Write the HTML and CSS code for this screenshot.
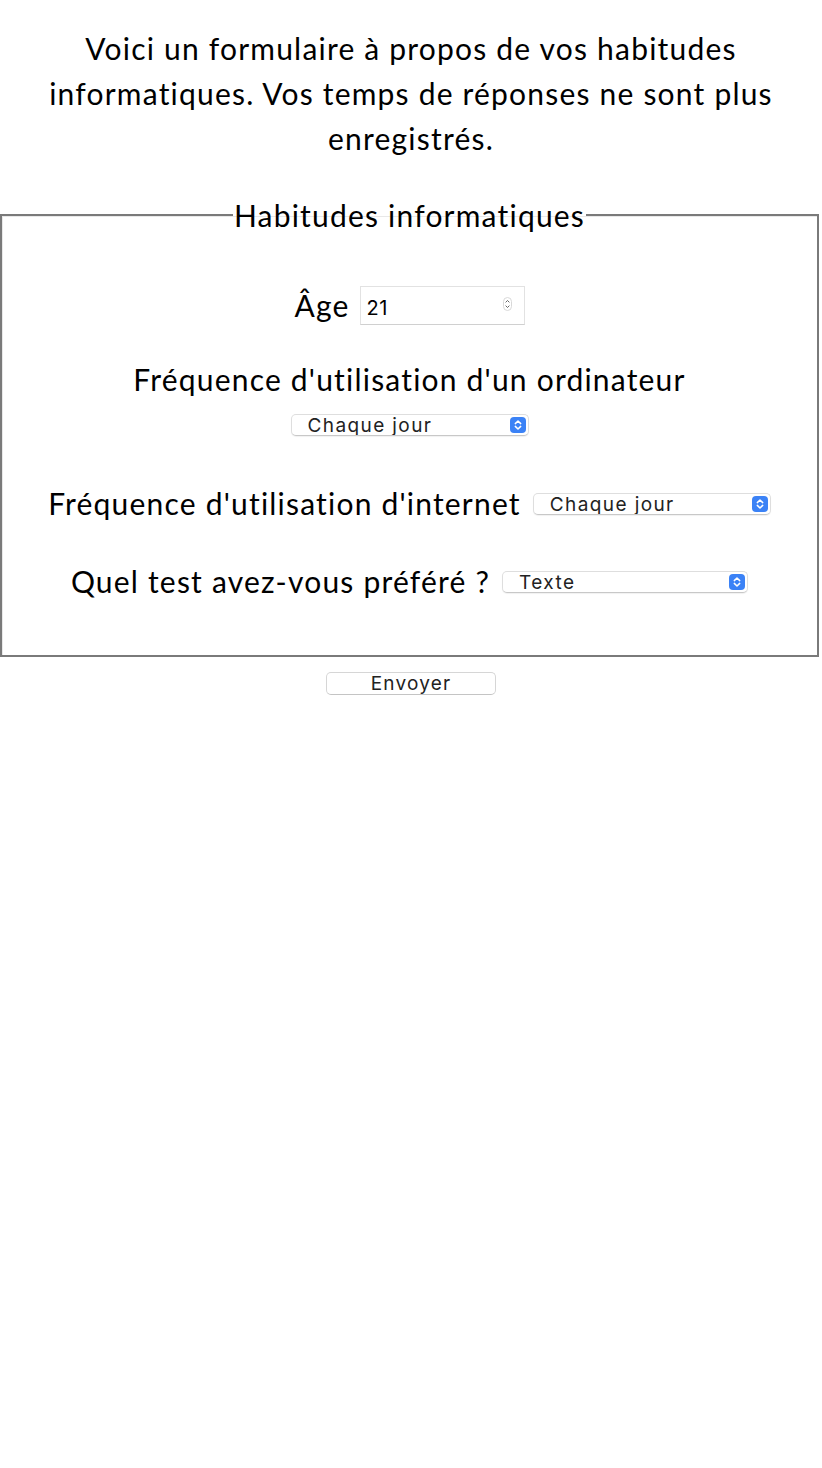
FILE: index.html
```html
<!DOCTYPE html>
<html lang="fr">
<head>
<meta charset="utf-8">
<title>Habitudes informatiques</title>
<link rel="stylesheet" href="styles.css">
</head>
<body>
<p class="intro">Voici un formulaire à propos de vos habitudes informatiques. Vos temps de réponses ne sont plus enregistrés.</p>
<form class="form">
  <fieldset class="group">
    <legend class="legend">Habitudes informatiques</legend>
    <div class="row row-age">
      <label class="label" for="age">Âge</label>
      <span class="number">
        <input class="number-input" id="age" type="text" value="21">
        <svg class="spin" width="9" height="14" viewBox="0 0 9 14"><rect x="0.5" y="0.5" width="8" height="13" rx="4" fill="none" stroke="#d8d8d8"/><path d="M2.6 5.4 L4.5 3.5 L6.4 5.4 M2.6 8.6 L4.5 10.5 L6.4 8.6" fill="none" stroke="#555" stroke-width="0.9"/></svg>
      </span>
    </div>
    <div class="row row-stacked">
      <label class="label" for="ordi">Fréquence d'utilisation d'un ordinateur</label>
      <span class="select select-ordi">
        <select class="select-el" id="ordi"><option>Chaque jour</option></select>
        <svg class="arrows" width="16" height="16" viewBox="0 0 16 16"><rect width="16" height="16" rx="4" fill="#3b82f6"/><path d="M5.3 6.6 L8 4 L10.7 6.6 M5.3 9.4 L8 12 L10.7 9.4" fill="none" stroke="#fff" stroke-width="1.5" stroke-linecap="round" stroke-linejoin="round"/></svg>
      </span>
    </div>
    <div class="row">
      <label class="label" for="net">Fréquence d'utilisation d'internet</label>
      <span class="select select-net">
        <select class="select-el" id="net"><option>Chaque jour</option></select>
        <svg class="arrows" width="16" height="16" viewBox="0 0 16 16"><rect width="16" height="16" rx="4" fill="#3b82f6"/><path d="M5.3 6.6 L8 4 L10.7 6.6 M5.3 9.4 L8 12 L10.7 9.4" fill="none" stroke="#fff" stroke-width="1.5" stroke-linecap="round" stroke-linejoin="round"/></svg>
      </span>
    </div>
    <div class="row row-last">
      <label class="label" for="test">Quel test avez-vous préféré ?</label>
      <span class="select select-test">
        <select class="select-el" id="test"><option>Texte</option></select>
        <svg class="arrows" width="16" height="16" viewBox="0 0 16 16"><rect width="16" height="16" rx="4" fill="#3b82f6"/><path d="M5.3 6.6 L8 4 L10.7 6.6 M5.3 9.4 L8 12 L10.7 9.4" fill="none" stroke="#fff" stroke-width="1.5" stroke-linecap="round" stroke-linejoin="round"/></svg>
      </span>
    </div>
  </fieldset>
  <div class="actions">
    <button class="submit" type="button">Envoyer</button>
  </div>
</form>
</body>
</html>
```

FILE: styles.css
```css
html, body {
  margin: 0;
  padding: 0;
  background: #fff;
}

body {
  font-family: "Lato", "Noto Sans", sans-serif;
  font-variant-ligatures: none;
  color: #000;
  font-size: 30px;
  letter-spacing: 1.2px;
}

.intro {
  margin: 26px 0 0;
  padding: 0 30px;
  text-align: center;
  line-height: 45px;
}

.form {
  margin: 0;
}

.group {
  margin: 34px 3px 0 0;
  padding: 0 8px 51px;
  border: 2px solid #7a7a7a;
  box-shadow: inset 1px 1px 0 #e8e8e8;
}

.legend {
  margin: 0 auto;
  padding: 0 1px;
  line-height: 40px;
}

.row {
  display: flex;
  justify-content: center;
  align-items: center;
  gap: 12px;
  height: 45px;
  margin-top: 33px;
}

.row-age {
  margin-top: 48px;
  gap: 10px;
}

.row-stacked {
  flex-direction: column;
  justify-content: flex-start;
  height: 91px;
  gap: 0;
  margin-top: 29px;
}

.row-stacked .select {
  margin-top: 12px;
}

.label {
  line-height: 45px;
}

.number {
  position: relative;
  display: inline-flex;
}

.number-input {
  box-sizing: border-box;
  width: 165px;
  height: 39px;
  margin: 0;
  padding: 4px 30px 0 6px;
  border: 1px solid #e2e2e2;
  border-bottom-color: #d0d0d0;
  font-family: "Inter", "Liberation Sans", sans-serif;
  font-size: 20px;
  letter-spacing: 0.5px;
  color: #000;
  background: #fff;
  outline: none;
}

.spin {
  position: absolute;
  right: 13px;
  top: 11px;
}

.select {
  position: relative;
  display: inline-flex;
}

.select-el {
  -webkit-appearance: none;
  appearance: none;
  box-sizing: border-box;
  height: 22px;
  margin: 0;
  padding: 1px 0 0 16px;
  border: 1px solid #dedede;
  border-bottom-color: #c8c8c8;
  border-radius: 5px;
  background: #fff;
  font-family: "Inter", "Liberation Sans", sans-serif;
  font-size: 19px;
  letter-spacing: 1.4px;
  line-height: 20px;
  color: #222;
  box-shadow: 0 1px 1px rgba(0,0,0,0.06);
}

.select-ordi .select-el,
.select-net .select-el {
  width: 238px;
}

.select-test .select-el {
  width: 246px;
}

.arrows {
  position: absolute;
  right: 3px;
  top: 3px;
  pointer-events: none;
}

.actions {
  display: flex;
  justify-content: center;
  margin-top: 15px;
}

.submit {
  box-sizing: border-box;
  width: 170px;
  height: 23px;
  margin: 0;
  padding: 0;
  border: 1px solid #d6d6d6;
  border-bottom-color: #c4c4c4;
  border-radius: 5px;
  background: #fff;
  font-family: "Inter", "Liberation Sans", sans-serif;
  font-size: 19px;
  letter-spacing: 1.2px;
  line-height: 20px;
  color: #222;
}
```
